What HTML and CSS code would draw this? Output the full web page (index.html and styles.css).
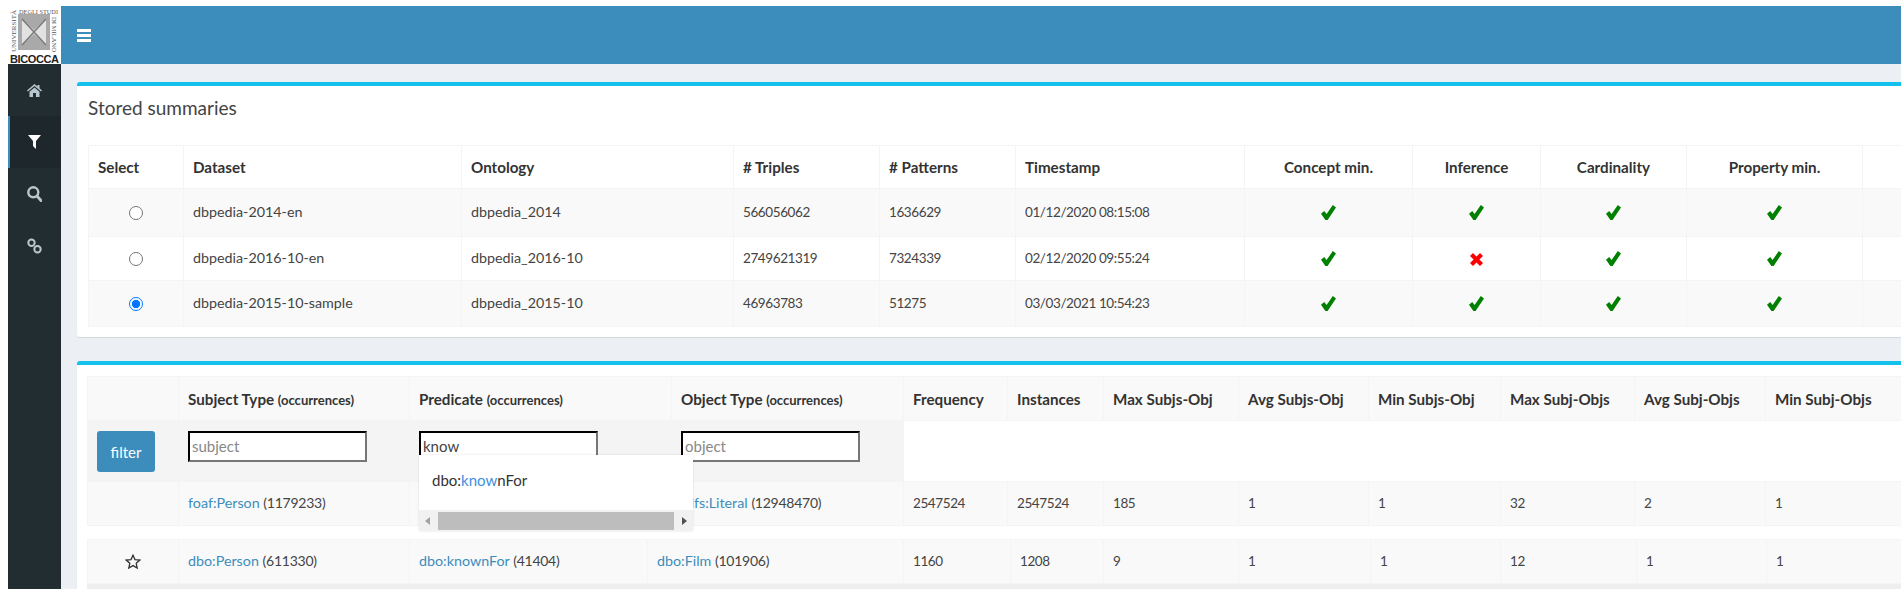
FILE: index.html
```html
<!DOCTYPE html>
<html lang="en">
<head>
<meta charset="utf-8">
<title>Stored summaries</title>
<link rel="stylesheet" href="styles.css">
</head>
<body>
<svg class="defs" width="0" height="0" aria-hidden="true">
  <symbol id="ok" viewBox="0 0 15 15" preserveAspectRatio="none"><path d="M0 8.8 3.2 6 5.6 9 11.8 0 15 2.4 6.6 15H4.4Z"/></symbol>
  <symbol id="no" viewBox="0 0 13 13" preserveAspectRatio="none"><path d="M0 3 3 0 6.5 3.6 10 0 13 3 9.4 6.5 13 10 10 13 6.5 9.4 3 13 0 10 3.6 6.5Z"/></symbol>
</svg>
<div class="app">
  <div class="logo">
    <svg viewBox="0 0 53 58" width="53" height="58">
      <rect width="53" height="58" fill="#fff"/>
      <rect x="10" y="8" width="32" height="36" fill="#a9a9a9"/>
      <path d="M14 13 26 24 38 13V39L26 28 14 39Z" fill="#e2e2e2"/>
      <path d="M14 13 38 39M38 13 14 39" stroke="#777" stroke-width="1.4"/>
      <text x="11" y="7.5" class="logo-small" textLength="39" lengthAdjust="spacingAndGlyphs">DEGLI STUDI</text>
      <text x="8" y="46" class="logo-small" transform="rotate(-90 8 46)" textLength="42" lengthAdjust="spacingAndGlyphs">UNIVERSITÀ</text>
      <text x="44" y="11" class="logo-small" transform="rotate(90 44 11)" textLength="35" lengthAdjust="spacingAndGlyphs">DI MILANO</text>
      <text x="2" y="57" class="logo-big" textLength="49">BICOCCA</text>
    </svg>
  </div>
  <header class="topbar">
    <button class="burger" aria-label="Toggle navigation"><span></span><span></span><span></span></button>
  </header>
  <nav class="sidebar">
    <a class="nav-item"><svg viewBox="0 0 15 13" width="15" height="13"><path d="M7.5 0 10.5 2.6V1H12.5V4.3L15 6.5 14 7.6 7.5 2 1 7.6 0 6.5ZM2.5 7.7 7.5 3.4 12.5 7.7V13H9V9H6V13H2.5Z"/></svg></a>
    <a class="nav-item active"><svg viewBox="0 0 13 14" width="13" height="14"><path d="M0 0H13L8 6V14L5 11V6Z"/></svg></a>
    <a class="nav-item"><svg viewBox="0 0 15 16" width="15" height="16"><circle cx="6.3" cy="6.3" r="5" fill="none" stroke="currentColor" stroke-width="2.4"/><path d="M10 10 14 14.6" stroke="currentColor" stroke-width="2.8" stroke-linecap="round"/></svg></a>
    <a class="nav-item"><svg viewBox="0 0 15 16" width="15" height="16"><circle cx="4.5" cy="4.8" r="3.2" fill="none" stroke="currentColor" stroke-width="2"/><circle cx="10.5" cy="11.2" r="3.2" fill="none" stroke="currentColor" stroke-width="2"/></svg></a>
  </nav>
  <main class="content">
    <section class="box box-first">
      <h3 class="box-title">Stored summaries</h3>
      <table class="grid summaries">
        <colgroup>
          <col class="w95"><col class="w278"><col class="w272"><col class="w146"><col class="w136"><col class="w229"><col class="w168"><col class="w128"><col class="w146"><col class="w176"><col class="w39">
        </colgroup>
        <thead>
          <tr class="h43">
            <th>Select</th><th>Dataset</th><th>Ontology</th><th># Triples</th><th># Patterns</th><th>Timestamp</th>
            <th class="c">Concept min.</th><th class="c">Inference</th><th class="c">Cardinality</th><th class="c">Property min.</th><th></th>
          </tr>
        </thead>
        <tbody>
          <tr class="h48 odd">
            <td class="c"><input class="radio" type="radio" name="summary"></td>
            <td>dbpedia-2014-en</td><td>dbpedia_2014</td><td class="num">566056062</td><td class="num">1636629</td><td class="num">01/12/2020 08:15:08</td>
            <td class="c"><svg class="ok"><use href="#ok"/></svg></td><td class="c"><svg class="ok"><use href="#ok"/></svg></td><td class="c"><svg class="ok"><use href="#ok"/></svg></td><td class="c"><svg class="ok"><use href="#ok"/></svg></td><td></td>
          </tr>
          <tr class="h44">
            <td class="c"><input class="radio" type="radio" name="summary"></td>
            <td>dbpedia-2016-10-en</td><td>dbpedia_2016-10</td><td class="num">2749621319</td><td class="num">7324339</td><td class="num">02/12/2020 09:55:24</td>
            <td class="c"><svg class="ok"><use href="#ok"/></svg></td><td class="c"><svg class="no"><use href="#no"/></svg></td><td class="c"><svg class="ok"><use href="#ok"/></svg></td><td class="c"><svg class="ok"><use href="#ok"/></svg></td><td></td>
          </tr>
          <tr class="h46 odd">
            <td class="c"><input class="radio" type="radio" name="summary" checked></td>
            <td>dbpedia-2015-10-sample</td><td>dbpedia_2015-10</td><td class="num">46963783</td><td class="num">51275</td><td class="num">03/03/2021 10:54:23</td>
            <td class="c"><svg class="ok"><use href="#ok"/></svg></td><td class="c"><svg class="ok"><use href="#ok"/></svg></td><td class="c"><svg class="ok"><use href="#ok"/></svg></td><td class="c"><svg class="ok"><use href="#ok"/></svg></td><td></td>
          </tr>
        </tbody>
      </table>
    </section>
    <section class="box box-second">
      <table class="grid patterns">
        <colgroup>
          <col class="w91"><col class="w231"><col class="w262"><col class="w232"><col class="w104"><col class="w96"><col class="w135"><col class="w130"><col class="w132"><col class="w134"><col class="w131"><col class="w136">
        </colgroup>
        <thead>
          <tr class="h44 odd">
            <th></th>
            <th>Subject Type <small>(occurrences)</small></th>
            <th>Predicate <small>(occurrences)</small></th>
            <th>Object Type <small>(occurrences)</small></th>
            <th>Frequency</th><th>Instances</th><th>Max Subjs-Obj</th><th>Avg Subjs-Obj</th><th>Min Subjs-Obj</th><th>Max Subj-Objs</th><th>Avg Subj-Objs</th><th>Min Subj-Objs</th>
          </tr>
        </thead>
        <tbody>
          <tr class="h61">
            <td class="filter-cell"><button class="btn-filter">filter</button></td>
            <td class="filter-cell"><input class="field" type="text" placeholder="subject"></td>
            <td class="filter-cell">
              <div class="combo">
                <input class="field" type="text" value="know">
                <div class="suggest">
                  <div class="suggest-item">dbo:<span class="hit">know</span>nFor</div>
                  <div class="scrollbar">
                    <span class="arrow arrow-left"></span>
                    <span class="thumb"></span>
                    <span class="arrow arrow-right"></span>
                  </div>
                </div>
              </div>
            </td>
            <td class="filter-cell"><input class="field" type="text" placeholder="object"></td>
            <td colspan="8" class="blank"></td>
          </tr>
          <tr class="h44 odd">
            <td></td>
            <td><a>foaf:Person</a> <span class="count">(1179233)</span></td>
            <td><a>dbo:knownFor</a> <span class="count">(41404)</span></td>
            <td><a>rdfs:Literal</a> <span class="count">(12948470)</span></td>
            <td class="num">2547524</td><td class="num">2547524</td><td class="num">185</td><td class="num">1</td><td class="num">1</td><td class="num">32</td><td class="num">2</td><td class="num">1</td>
          </tr>
        </tbody>
      </table>
      <table class="grid patterns patterns-next">
        <colgroup>
          <col class="w91"><col class="w231"><col class="w238"><col class="w256"><col class="w107"><col class="w93"><col class="w135"><col class="w132"><col class="w130"><col class="w136"><col class="w130"><col class="w135">
        </colgroup>
        <tbody>
          <tr class="h44 odd">
            <td class="c"><svg class="star" viewBox="0 0 16 15" width="16" height="15"><path d="M8 1.2 10 5.6 14.8 6.1 11.2 9.3 12.2 14 8 11.6 3.8 14 4.8 9.3 1.2 6.1 6 5.6Z"/></svg></td>
            <td><a>dbo:Person</a> <span class="count">(611330)</span></td>
            <td><a>dbo:knownFor</a> <span class="count">(41404)</span></td>
            <td><a>dbo:Film</a> <span class="count">(101906)</span></td>
            <td class="num">1160</td><td class="num">1208</td><td class="num">9</td><td class="num">1</td><td class="num">1</td><td class="num">12</td><td class="num">1</td><td class="num">1</td>
          </tr>
        </tbody>
      </table>
      <div class="strip"></div>
    </section>
  </main>
</div>
</body>
</html>
```
FILE: styles.css
```css
* { box-sizing: border-box; }
html, body { height: 100%; }
body {
  margin: 0;
  padding: 6px 0 6px 8px;
  background: #fff;
  font-family: "Lato", "Open Sans", sans-serif;
  font-size: 14.3px;
  color: #444;
  overflow: hidden;
}
.defs { position: absolute; }
.app {
  display: grid;
  grid-template-columns: 53px 1fr;
  grid-template-rows: 58px 1fr;
  height: 100%;
  overflow: hidden;
}
.logo { line-height: 0; background: #fff; }
.logo-small { font: 6.5px "Liberation Serif", serif; fill: #555; }
.logo-big { font: bold 11px "Liberation Sans Narrow", "Liberation Sans", sans-serif; fill: #222; }
.topbar {
  background: #3c8dbc;
  display: flex;
  align-items: center;
  padding-left: 16px;
}
.burger {
  display: flex;
  flex-direction: column;
  gap: 2px;
  width: 14px;
  padding: 0;
  border: 0;
  background: none;
}
.burger span { display: block; height: 3px; background: #fff; }
.sidebar { background: #222d32; }
.nav-item {
  display: flex;
  align-items: center;
  justify-content: center;
  height: 52px;
  color: #b8c7ce;
}
.nav-item svg { fill: currentColor; }
.nav-item.active {
  background: #1e282c;
  border-left: 2px solid #3c8dbc;
  padding-right: 2px;
  color: #fff;
}
.content {
  background: #ecf0f5;
  padding: 18px 0 0 16px;
  overflow: hidden;
}
.box {
  background: #fff;
  border-top: 4px solid #14c0ec;
  border-radius: 3px 0 0 3px;
  box-shadow: 0 1px 1px rgba(0, 0, 0, .1);
}
.box-first { height: 255px; padding-left: 11px; margin-bottom: 24px; }
.box-second { height: 260px; padding: 11px 0 0 10px; }
.box-title {
  margin: 0;
  height: 59px;
  padding-top: 10px;
  font-size: 19px;
  font-weight: 400;
  line-height: 24px;
  color: #444;
}
.grid { border-collapse: collapse; table-layout: fixed; }
.summaries { width: 1813px; }
.patterns { width: 1814px; }
.patterns-next { margin-top: 13px; }
.grid th, .grid td {
  padding: 0 9px;
  border: 1px solid #f4f4f4;
  text-align: left;
  white-space: nowrap;
  overflow: visible;
}
.grid td { padding-bottom: 2px; }
.grid th { font-size: 15.2px; font-weight: 700; color: #333; }
.grid th small { font-size: 13px; }
.grid .c { text-align: center; }
.grid a { color: #3c8dbc; }
.grid .num { font-size: 13.5px; letter-spacing: -.4px; }
.count { font-size: 14px; letter-spacing: -.25px; }
.odd { background: #f9f9f9; }
.h43 { height: 43px; }
.h44 { height: 44px; }
.h46 { height: 46px; }
.h48 { height: 48px; }
.h61 { height: 61px; }
.w39 { width: 39px; } .w91 { width: 91px; } .w93 { width: 93px; } .w95 { width: 95px; }
.w96 { width: 96px; } .w104 { width: 104px; } .w107 { width: 107px; } .w128 { width: 128px; }
.w130 { width: 130px; } .w131 { width: 131px; } .w132 { width: 132px; } .w134 { width: 134px; }
.w135 { width: 135px; } .w136 { width: 136px; } .w146 { width: 146px; } .w168 { width: 168px; }
.w176 { width: 176px; } .w229 { width: 229px; } .w231 { width: 231px; }
.w232 { width: 232px; } .w238 { width: 238px; } .w256 { width: 256px; } .w262 { width: 262px; }
.w272 { width: 272px; } .w278 { width: 278px; }
.radio { width: 14px; height: 14px; margin: 0; vertical-align: middle; }
.ok { width: 15px; height: 15px; fill: #008000; vertical-align: middle; }
.no { width: 13px; height: 13px; fill: #f00; vertical-align: middle; }
.star { fill: none; stroke: #333; stroke-width: 1.3; vertical-align: middle; }
.grid .filter-cell { background: #f4f4f4; vertical-align: top; padding-top: 10px; }
.grid .blank { background: #fff; }
.btn-filter {
  display: block;
  width: 58px;
  height: 41px;
  border: 0;
  border-radius: 3px;
  background: #3c8dbc;
  color: #fff;
  font: 15px "Lato", sans-serif;
}
.field {
  display: block;
  width: 179px;
  height: 31px;
  padding: 0 2px 2px;
  border: 2px inset #767676;
  border-top-color: #333;
  border-left-color: #333;
  background: #fff;
  color: #444;
  font: 15px "Lato", sans-serif;
}
.field::placeholder { color: #888; }
.combo { position: relative; }
.suggest {
  position: absolute;
  top: 24px;
  left: 0;
  width: 274px;
  height: 76px;
  background: #fff;
  box-shadow: 0 0 2px rgba(0, 0, 0, .12);
  z-index: 2;
}
.suggest-item {
  height: 55px;
  padding: 13px 13px 0;
  font-size: 15px;
  line-height: 24px;
  color: #333;
}
.hit { color: #3d8fe0; }
.scrollbar {
  display: flex;
  align-items: center;
  height: 21px;
  padding: 0 6px;
  background: #f1f1f1;
}
.thumb { flex: 1; height: 18px; margin: 0 8px; background: #bdbdbd; }
.arrow { width: 0; height: 0; border-top: 4px solid transparent; border-bottom: 4px solid transparent; }
.arrow-left { border-right: 5px solid #a3a3a3; }
.arrow-right { border-left: 5px solid #505050; }
.strip { height: 6px; background: #eeeeee; width: 1814px; }
```
